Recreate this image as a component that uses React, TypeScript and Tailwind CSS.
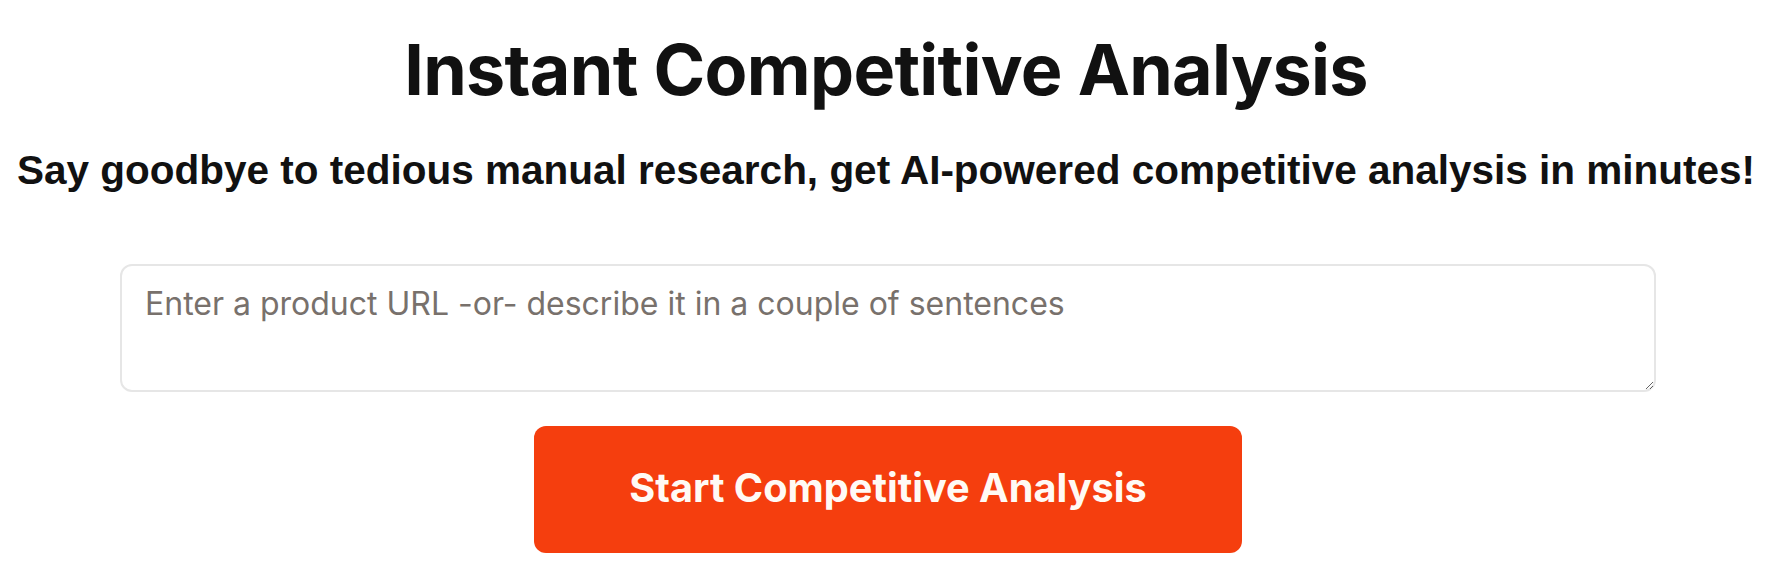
import React, { useState } from "react";

const App = () => {
  const [product, setProduct] = useState("");

  return (
    <div className="min-h-screen w-full bg-white flex flex-col items-center pt-[35px]">
      <h1 className="font-['Inter',sans-serif] font-bold text-[70px] leading-none tracking-[-0.01em] text-[#111111]">
        Instant Competitive Analysis
      </h1>
      <p className="mt-[45px] font-['Liberation_Sans',Arial,sans-serif] font-bold text-[40.5px] leading-none text-[#111111] whitespace-nowrap">
        Say goodbye to tedious manual research, get AI-powered competitive analysis in minutes!
      </p>
      <textarea
        className="block mt-[73px] w-[1536px] h-[128px] rounded-[12px] border-2 border-[#e6e6e6] px-[23px] py-[16px] font-['Inter',sans-serif] text-[32px] leading-[1.4] text-[#1c1917] placeholder:text-[#78716c] outline-none ml-[4px]"
        placeholder="Enter a product URL -or- describe it in a couple of sentences"
        value={product}
        onChange={(e) => setProduct(e.target.value)}
      />
      <button className="mt-[34px] w-[708px] h-[127px] rounded-[12px] bg-[#f53e0e] font-['Inter',sans-serif] font-bold text-[39.7px] text-[#fffaf5] ml-[4px]">
        Start Competitive Analysis
      </button>
    </div>
  );
};

export default App;
